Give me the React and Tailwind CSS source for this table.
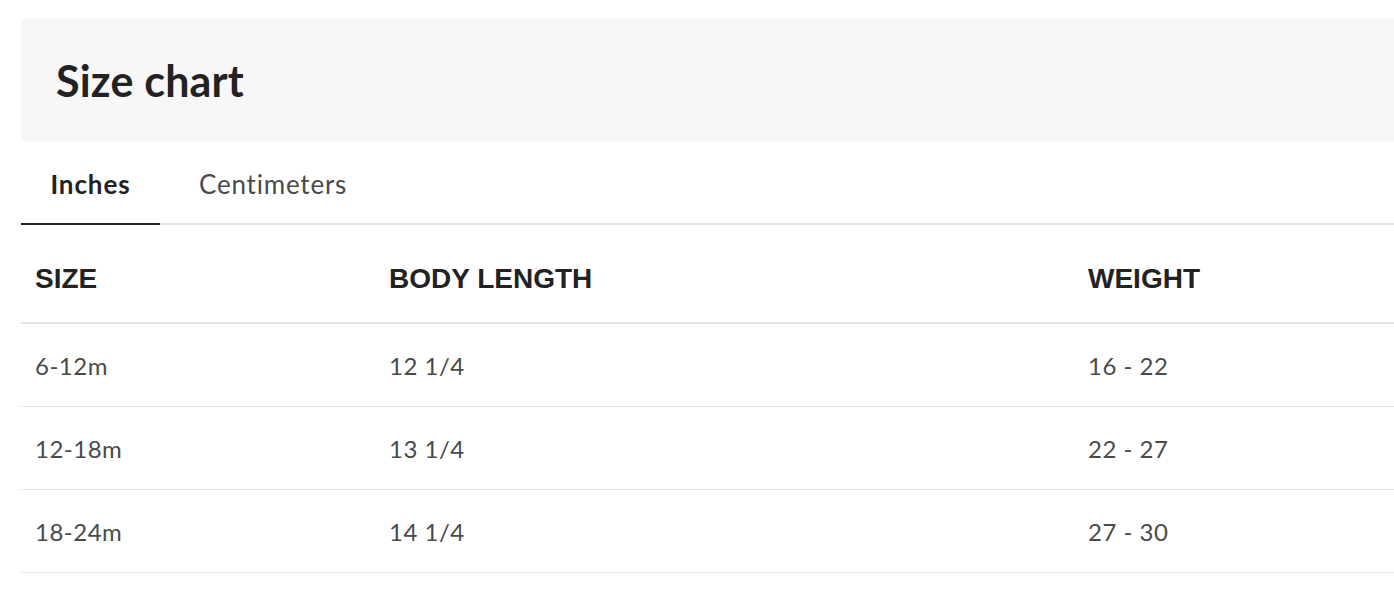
export default function App() {
  const rows = [
    ["6-12m", "12 1/4", "16 - 22"],
    ["12-18m", "13 1/4", "22 - 27"],
    ["18-24m", "14 1/4", "27 - 30"],
  ];
  return (
    <div className="w-[1394px] h-[590px] overflow-hidden bg-white pl-[21px] pt-[19px]" style={{ fontFamily: "Lato, 'Open Sans', sans-serif" }}>
      <div className="w-[1400px]">
        <div className="h-[122px] bg-[#f7f7f7] flex items-center px-[35px]">
          <h1 className="text-[43px] leading-[48px] font-bold text-[#222222] tracking-[0.2px] pt-[1px]">Size chart</h1>
        </div>
        <div className="flex border-b-2 border-[#e6e6e6] h-[84px]">
          <button className="w-[139px] -mb-[2px] border-b-2 border-[#222222] text-[26px] leading-[32px] font-bold text-[#222222] tracking-[0.9px] pt-[27px] pb-[23px]">Inches</button>
          <button className="ml-[10px] px-[29px] -mb-[2px] border-b-2 border-transparent text-[26px] leading-[32px] text-[#4a4a4a] pt-[27px] pb-[23px] tracking-[0.8px]">Centimeters</button>
        </div>
        <div className="grid grid-cols-[354px_699px_1fr] border-b-2 border-[#e3e3e3]">
          {["SIZE", "BODY LENGTH", "WEIGHT"].map((h) => (
            <div key={h} className="pl-[14px] pt-[40px] pb-[29px] text-[28px] leading-[28px] font-bold text-[#222222]" style={{ fontFamily: "'Liberation Sans', Arial, sans-serif" }}>{h}</div>
          ))}
        </div>
        {rows.map((r) => (
          <div key={r[0]} className="grid grid-cols-[354px_699px_1fr] border-b border-[#e3e3e3] h-[83px]">
            {r.map((c, i) => (
              <div key={i} className="pl-[14px] pt-[26px] text-[24px] leading-[32px] text-[#4a4a4a] tracking-[0.5px]">{c}</div>
            ))}
          </div>
        ))}
      </div>
    </div>
  );
}
